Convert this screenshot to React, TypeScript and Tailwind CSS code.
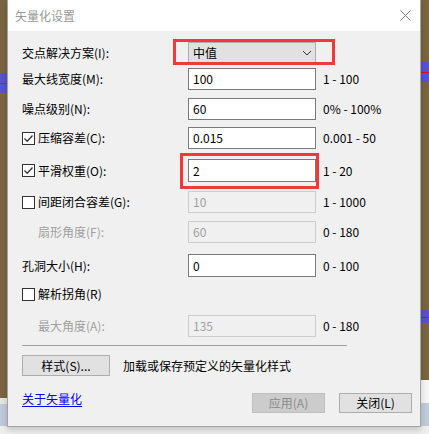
import React from "react";

const FONT = { fontFamily: '"Noto Sans CJK SC", "Noto Sans", sans-serif' };

function Check({ checked }: { checked: boolean }) {
  return (
    <div className="w-[13px] h-[13px] border border-[#333333] bg-white flex items-center justify-center shrink-0">
      {checked && (
        <svg width="11" height="11" viewBox="0 0 11 11">
          <path d="M1.5 5.5 L4.2 8.2 L9.5 2.5" fill="none" stroke="#333333" strokeWidth="1.3" />
        </svg>
      )}
    </div>
  );
}

function Label({ text, kind }: { text: string; kind: "plain" | "checked" | "unchecked" | "disabled" }) {
  if (kind === "plain") {
    return <div className="w-[166px] shrink-0 text-[12px] leading-[14px] text-black">{text}</div>;
  }
  if (kind === "disabled") {
    return <div className="w-[166px] shrink-0 pl-[16px] text-[12px] leading-[14px] text-[#a0a0a0]">{text}</div>;
  }
  return (
    <div className="w-[166px] shrink-0 flex items-center gap-[3px] text-[12px] leading-[14px] text-black">
      <Check checked={kind === "checked"} />
      <span>{text}</span>
    </div>
  );
}

function Input({ value, disabled, children }: { value: string; disabled?: boolean; children?: React.ReactNode }) {
  return (
    <div
      className={
        "relative w-[128px] h-full flex items-center pl-[4px] text-[12px] leading-[14px] " +
        (disabled ? "bg-[#f0f0f0] border border-[#cccccc] text-[#a0a0a0]" : "bg-white border border-[#7a7a7a] text-black")
      }
    >
      {value}
      {children}
    </div>
  );
}

function Range({ text }: { text: string }) {
  return <div className="ml-[7px] text-[12px] leading-[14px] text-black">{text}</div>;
}

export default function App() {
  return (
    <div className="relative w-[429px] h-[434px] overflow-hidden bg-[#eeeeee]" style={FONT}>
      {/* desktop behind the window */}
      <div className="absolute left-0 top-0 w-[7px] h-[398px] bg-[#7a6540]" />
      <div className="absolute left-0 top-[398px] w-[7px] h-[6px] bg-[#e6e6e6]" />
      <div className="absolute left-0 top-[404px] w-[7px] h-[22px] bg-[#bfcad8]" />
      <div className="absolute left-0 top-[73px] w-[7px] h-[20px] bg-[#5a50d2]" />
      <div className="absolute left-0 top-[83px] w-[7px] h-[1px] bg-[#e01010]" />
      <div className="absolute left-[421px] top-0 w-[8px] h-[380px] bg-[#7a6540]" />
      <div className="absolute left-[421px] top-[380px] w-[8px] h-[23px] bg-[#f4f4f4]" />
      <div className="absolute left-[421px] top-[403px] w-[8px] h-[23px] bg-[#c0cbd9]" />
      <div className="absolute left-[421px] top-[62px] w-[8px] h-[20px] bg-[#5a50d2]" />
      <div className="absolute left-[421px] top-[72px] w-[8px] h-[1px] bg-[#e01010]" />
      <div className="absolute left-[421px] top-[310px] w-[8px] h-[13px] bg-[#5a50d2]" />
      <div className="absolute left-[421px] top-[317px] w-[8px] h-[1px] bg-[#e01010]" />

      {/* dialog window */}
      <div className="absolute left-[7px] top-0 w-[414px] h-[427px] flex flex-col border border-t-0 border-[#a3a3a3] bg-[#f0f0f0] shadow-[0_3px_6px_rgba(0,0,0,0.18)]">
        <div className="h-[31px] bg-white flex items-center justify-between pl-[7px] pr-[9px] shrink-0">
          <span className="text-[12px] leading-[14px] text-[#9a9a9a]">矢量化设置</span>
          <svg width="11" height="11" viewBox="0 0 11 11">
            <path d="M0.5 0.5 L10.5 10.5 M10.5 0.5 L0.5 10.5" stroke="#7a7a7a" strokeWidth="1" />
          </svg>
        </div>

        <div className="flex-1 flex flex-col pl-[14px]">
          {/* row 1 combo */}
          <div className="mt-[11px] h-[21px] flex items-center">
            <Label text="交点解决方案(I):" kind="plain" />
            <div className="relative w-[128px] h-full bg-[#e1e1e1] border border-[#adadad] flex items-center justify-between pl-[4px] pr-[3px] text-[12px] leading-[14px] text-black">
              <span>中值</span>
              <svg width="10" height="6" viewBox="0 0 10 6">
                <path d="M1 1 L5 5 L9 1" fill="none" stroke="#333333" strokeWidth="1" />
              </svg>
              <div className="absolute left-[-16px] right-[-20px] top-[-4px] bottom-[-3px] border-[3px] border-[#f03a3a]" />
            </div>
          </div>

          <div className="mt-[5px] h-[22px] flex items-center">
            <Label text="最大线宽度(M):" kind="plain" />
            <Input value="100" />
            <Range text="1 - 100" />
          </div>

          <div className="mt-[8px] h-[22px] flex items-center">
            <Label text="噪点级别(N):" kind="plain" />
            <Input value="60" />
            <Range text="0% - 100%" />
          </div>

          <div className="mt-[7px] h-[22px] flex items-center">
            <Label text="压缩容差(C):" kind="checked" />
            <Input value="0.015" />
            <Range text="0.001 - 50" />
          </div>

          <div className="mt-[10px] h-[23px] flex items-center">
            <Label text="平滑权重(O):" kind="checked" />
            <Input value="2">
              <div className="absolute left-[-9px] right-[-4px] top-[-7px] bottom-[-8px] border-[3px] border-[#f03a3a]" />
            </Input>
            <Range text="1 - 20" />
          </div>

          <div className="mt-[9px] h-[22px] flex items-center">
            <Label text="间距闭合容差(G):" kind="unchecked" />
            <Input value="10" disabled />
            <Range text="1 - 1000" />
          </div>

          <div className="mt-[8px] h-[22px] flex items-center">
            <Label text="扇形角度(F):" kind="disabled" />
            <Input value="60" disabled />
            <Range text="0 - 180" />
          </div>

          <div className="mt-[11px] h-[23px] flex items-center">
            <Label text="孔洞大小(H):" kind="plain" />
            <Input value="0" />
            <Range text="0 - 100" />
          </div>

          <div className="mt-[6px] h-[22px] flex items-center">
            <Label text="解析拐角(R)" kind="unchecked" />
          </div>

          <div className="mt-[10px] h-[22px] flex items-center">
            <Label text="最大角度(A):" kind="disabled" />
            <Input value="135" disabled />
            <Range text="0 - 180" />
          </div>

          <div className="mt-[8px] h-[1px] w-[325px] bg-[#a0a0a0]" />

          <div className="mt-[9px] h-[21px] flex items-center">
            <div className="w-[88px] h-full bg-[#e1e1e1] border border-[#adadad] flex items-center justify-center text-[12px] leading-[14px] text-black">
              样式(S)...
            </div>
            <span className="ml-[13px] text-[12px] leading-[14px] text-black">加载或保存预定义的矢量化样式</span>
          </div>

          <div className="mt-[17px] h-[20px] flex items-start justify-between pr-[8px]">
            <a className="text-[12px] leading-[14px] text-[#0000ff] underline underline-offset-2 mt-[-1px]" href="#">
              关于矢量化
            </a>
            <div className="flex gap-[14px] h-full">
              <div className="w-[73px] h-full bg-[#cccccc] border border-[#bfbfbf] flex items-center justify-center text-[12px] leading-[14px] text-[#8a8a8a]">
                应用(A)
              </div>
              <div className="w-[73px] h-full bg-[#e1e1e1] border border-[#adadad] flex items-center justify-center text-[12px] leading-[14px] text-black">
                关闭(L)
              </div>
            </div>
          </div>
        </div>
      </div>
    </div>
  );
}
